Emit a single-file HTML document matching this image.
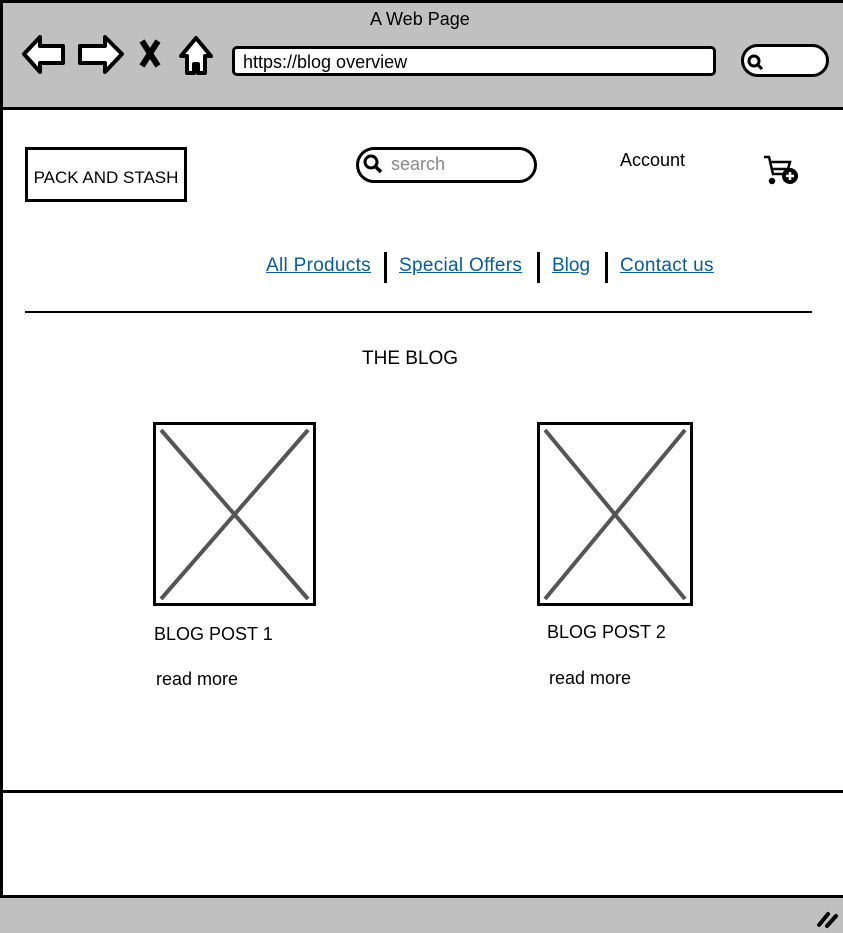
<!DOCTYPE html>
<html><head><meta charset="utf-8"><style>
body{margin:0;width:843px;height:933px;position:relative;overflow:hidden;background:#fff;font-family:"Liberation Sans",sans-serif;color:#000}
.a{position:absolute}
a{color:#0a5aa0;text-decoration:underline}
</style></head><body>
<div class="a" style="left:0;top:0;width:843px;height:108px;background:#c0c0c0;border-top:3px solid #000;box-sizing:border-box"></div>
<div class="a" style="left:0;top:0;width:3px;height:933px;background:#000"></div>
<div class="a" style="left:0;top:107px;width:843px;height:3px;background:#000"></div>
<div class="a" style="left:370px;top:9px;font-size:18px">A Web Page</div>
<svg class="a" style="left:20px;top:34px" width="200" height="44" viewBox="0 0 200 44" fill="#fff" stroke="#000" stroke-width="4" stroke-linejoin="round">
<path d="M4 20 L20 3 L20 12 L43 12 L43 29 L20 29 L20 38 Z"/>
<path d="M102 20 L85 3 L85 12 L60 12 L60 29 L85 29 L85 38 Z"/>
<path d="M122 7 L138 32 M138 7 L122 32" stroke-width="6"/>
<path d="M176 4 L161 22 L167 22 L167 39 L174 39 L174 30 L178 30 L178 39 L185 39 L185 22 L191 22 Z"/>
</svg>
<div class="a" style="left:232px;top:46px;width:484px;height:30px;background:#fff;border:3px solid #000;border-radius:5px;box-sizing:border-box;font-size:18px;padding:3px 8px">https://blog overview</div>
<div class="a" style="left:741px;top:44px;width:88px;height:33px;background:#fff;border:3px solid #000;border-radius:18px;box-sizing:border-box"></div>
<svg class="a" style="left:746px;top:53px" width="18" height="18"><circle cx="8" cy="8" r="5" fill="none" stroke="#000" stroke-width="3"/><path d="M11 11 L16 16" stroke="#000" stroke-width="3"/></svg>
<div class="a" style="left:25px;top:147px;width:162px;height:55px;border:3px solid #000;box-sizing:border-box;font-size:17px;line-height:55px;text-align:center">PACK AND STASH</div>
<div class="a" style="left:356px;top:147px;width:181px;height:36px;border:3px solid #000;border-radius:18px;box-sizing:border-box;font-size:18px;color:#888;padding:4px 0 0 32px">search</div>
<svg class="a" style="left:362px;top:153px" width="22" height="22"><circle cx="9" cy="9" r="6" fill="none" stroke="#000" stroke-width="3"/><path d="M13 13 L19 19" stroke="#000" stroke-width="3.5"/></svg>
<div class="a" style="left:620px;top:150px;font-size:18px">Account</div>
<svg class="a" style="left:762px;top:154px" width="40" height="34" fill="none" stroke="#000" stroke-width="2.5"><path d="M2 3 L7 3 L11 20 L24 20 M8 8 L28 8 L26 15 L10 15"/><circle cx="10" cy="27" r="2" fill="#000"/><circle cx="28" cy="22" r="8" fill="#000" stroke="none"/><path d="M28 18 V26 M24 22 H32" stroke="#fff" stroke-width="2.5"/></svg>
<div class="a" style="left:266px;top:255px;font-size:19px;white-space:nowrap;letter-spacing:0.3px"><a>All Products</a></div>
<div class="a" style="left:384px;top:252px;width:3px;height:31px;background:#000"></div>
<div class="a" style="left:399px;top:255px;font-size:19px;white-space:nowrap;letter-spacing:0.3px"><a>Special Offers</a></div>
<div class="a" style="left:537px;top:252px;width:3px;height:31px;background:#000"></div>
<div class="a" style="left:552px;top:255px;font-size:19px"><a>Blog</a></div>
<div class="a" style="left:605px;top:252px;width:3px;height:31px;background:#000"></div>
<div class="a" style="left:620px;top:255px;font-size:19px;white-space:nowrap;letter-spacing:0.3px"><a>Contact us</a></div>
<div class="a" style="left:25px;top:311px;width:787px;height:2px;background:#000"></div>
<div class="a" style="left:362px;top:348px;font-size:19px">THE BLOG</div>
<svg class="a" style="left:153px;top:422px" width="163" height="184"><rect x="1.5" y="1.5" width="160" height="181" fill="#fff" stroke="#000" stroke-width="3"/><path d="M8 8 L155 177 M155 8 L8 177" stroke="#555" stroke-width="4"/></svg>
<svg class="a" style="left:537px;top:422px" width="156" height="184"><rect x="1.5" y="1.5" width="153" height="181" fill="#fff" stroke="#000" stroke-width="3"/><path d="M8 8 L148 177 M148 8 L8 177" stroke="#555" stroke-width="4"/></svg>
<div class="a" style="left:154px;top:624px;font-size:18px">BLOG POST 1</div>
<div class="a" style="left:547px;top:622px;font-size:18px">BLOG POST 2</div>
<div class="a" style="left:156px;top:669px;font-size:18px">read more</div>
<div class="a" style="left:549px;top:668px;font-size:18px">read more</div>
<div class="a" style="left:3px;top:790px;width:840px;height:3px;background:#000"></div>
<div class="a" style="left:0;top:895px;width:843px;height:38px;background:#c0c0c0;border-top:3px solid #000;box-sizing:border-box"></div>
<svg class="a" style="left:815px;top:908px" width="26" height="22" stroke="#000" stroke-width="4" stroke-linecap="round"><path d="M4 17 L13 6 M12 18 L21 8"/></svg>
</body></html>
